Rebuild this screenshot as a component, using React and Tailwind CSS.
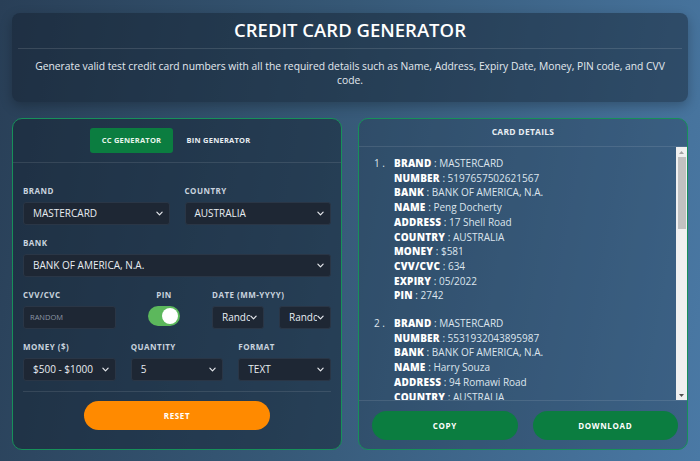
import React from "react";

const font = { fontFamily: '"Open Sans", "Noto Sans", sans-serif' };

function Chevron() {
  return (
    <svg width="7" height="5" viewBox="0 0 8 5" className="shrink-0">
      <path d="M1 1l3 3 3-3" fill="none" stroke="#e5e7eb" strokeWidth="1.4" strokeLinecap="round" strokeLinejoin="round" />
    </svg>
  );
}

function Select({ value, className = "", clip = false }) {
  return (
    <div className={`h-[23px] rounded-[3px] bg-[#1e2734] border border-[#2a3646] flex items-center justify-between pl-[9px] pr-[6px] ${className}`}>
      <span className={`text-[10px] text-[#e8edf2] whitespace-nowrap ${clip ? "overflow-hidden w-[29px]" : ""}`}>{value}</span>
      <Chevron />
    </div>
  );
}

function Label({ children, className = "" }) {
  return <div className={`text-[8px] font-bold tracking-[0.06em] text-[#c9d3de] mb-[6px] leading-[10px] ${className}`}>{children}</div>;
}

const cards = [
  [
    ["BRAND", "MASTERCARD"],
    ["NUMBER", "5197657502621567"],
    ["BANK", "BANK OF AMERICA, N.A."],
    ["NAME", "Peng Docherty"],
    ["ADDRESS", "17 Shell Road"],
    ["COUNTRY", "AUSTRALIA"],
    ["MONEY", "$581"],
    ["CVV/CVC", "634"],
    ["EXPIRY", "05/2022"],
    ["PIN", "2742"],
  ],
  [
    ["BRAND", "MASTERCARD"],
    ["NUMBER", "5531932043895987"],
    ["BANK", "BANK OF AMERICA, N.A."],
    ["NAME", "Harry Souza"],
    ["ADDRESS", "94 Romawi Road"],
    ["COUNTRY", "AUSTRALIA"],
    ["MONEY", "$742"],
    ["CVV/CVC", "118"],
    ["EXPIRY", "09/2024"],
    ["PIN", "5081"],
  ],
];

export default function App() {
  return (
    <div
      style={font}
      className="w-[700px] h-[461px] overflow-hidden bg-[linear-gradient(100deg,#293f57_0%,#365876_45%,#4a79a5_100%)] px-3 pt-[13px] text-white"
    >
      {/* header */}
      <div className="h-[89px] rounded-[8px] bg-[rgba(18,28,42,0.45)] shadow-[0_4px_12px_rgba(0,0,0,0.25)] px-[6px] pt-[4px] flex flex-col items-center">
        <h1 className="text-[18.5px] font-semibold leading-[26px] text-white">CREDIT CARD GENERATOR</h1>
        <div className="w-full h-px bg-[rgba(255,255,255,0.12)] mt-[5px]" />
        <p className="text-[10.3px] leading-[14px] text-[#e3e9ef] text-center mt-[10px] px-[6px]">
          Generate valid test credit card numbers with all the required details such as Name, Address, Expiry Date, Money, PIN code, and CVV code.
        </p>
      </div>

      <div className="flex gap-4 mt-4">
        {/* left panel */}
        <div className="w-[330px] h-[332px] rounded-[10px] border border-[#17905a] bg-[rgba(18,28,42,0.45)] flex flex-col">
          <div className="h-[44px] flex items-center justify-center gap-[4px] border-b border-[rgba(255,255,255,0.1)]">
            <div className="w-[83px] h-[25px] rounded-[3px] bg-[#0b7d40] flex items-center justify-center text-[7.5px] font-bold tracking-[0.03em] text-[#e8f5ec] ml-[-4px]">CC GENERATOR</div>
            <div className="w-[83px] h-[25px] flex items-center justify-center text-[7.5px] font-bold tracking-[0.03em] text-[#e8edf2]">BIN GENERATOR</div>
          </div>
          <div className="px-[10px] pt-[23px] flex flex-col">
            <div className="grid grid-cols-2 gap-x-[15px]">
              <div>
                <Label>BRAND</Label>
                <Select value="MASTERCARD" />
              </div>
              <div>
                <Label>COUNTRY</Label>
                <Select value="AUSTRALIA" />
              </div>
            </div>
            <div className="mt-[13px]">
              <Label>BANK</Label>
              <Select value="BANK OF AMERICA, N.A." />
            </div>
            <div className="mt-[13px] flex">
              <div className="w-[93px]">
                <Label>CVV/CVC</Label>
                <div className="h-[23px] rounded-[3px] bg-[#1e2734] border border-[#2a3646] flex items-center pl-[6px] text-[7.5px] text-[#8b96a3]">RANDOM</div>
              </div>
              <div className="flex-1 flex flex-col items-center">
                <Label>PIN</Label>
                <div className="w-[32px] h-[20px] rounded-full bg-[#5cb85c] flex items-center justify-end px-[2px]">
                  <div className="w-[16px] h-[16px] rounded-full bg-white" />
                </div>
              </div>
              <div className="w-[119px]">
                <Label>DATE (MM-YYYY)</Label>
                <div className="flex justify-between">
                  <Select value="Random" clip className="w-[52px] pl-[9px]" />
                  <Select value="Random" clip className="w-[52px] pl-[9px]" />
                </div>
              </div>
            </div>
            <div className="mt-[13px] grid grid-cols-3 gap-x-[15px]">
              <div>
                <Label>MONEY ($)</Label>
                <Select value="$500 - $1000" />
              </div>
              <div>
                <Label>QUANTITY</Label>
                <Select value="5" />
              </div>
              <div>
                <Label>FORMAT</Label>
                <Select value="TEXT" />
              </div>
            </div>
            <div className="h-px bg-[rgba(255,255,255,0.1)] mt-[10px]" />
            <div className="flex justify-center mt-[9px]">
              <div className="w-[186px] h-[29px] rounded-full bg-[#ff8a00] flex items-center justify-center text-[8px] font-bold tracking-[0.08em] text-white">RESET</div>
            </div>
          </div>
        </div>

        {/* right panel */}
        <div className="w-[330px] h-[332px] rounded-[10px] border border-[#17905a] bg-[rgba(30,45,65,0.3)] flex flex-col overflow-hidden">
          <div className="h-[28px] flex items-center justify-center border-b border-[rgba(255,255,255,0.1)] text-[8.5px] font-bold tracking-[0.03em] text-[#e8edf2]">CARD DETAILS</div>
          <div className="relative h-[254px] overflow-hidden border-b border-[rgba(255,255,255,0.1)]">
            <div className="pl-[15px] pt-[9px] pr-[14px]">
              {cards.map((c, i) => (
                <div key={i} className="flex mb-[13px]">
                  <div className="w-[20px] text-[10px] leading-[14.7px] text-[#dde5ed]">{i + 1} .</div>
                  <div className="flex flex-col">
                    {c.map(([k, v]) => (
                      <div key={k} className="text-[10px] leading-[14.7px] text-[#dde5ed] whitespace-nowrap">
                        <span className="font-extrabold text-white tracking-[0.02em]">{k}</span> : {v}
                      </div>
                    ))}
                  </div>
                </div>
              ))}
            </div>
            {/* scrollbar */}
            <div className="absolute right-0 top-0 bottom-0 w-[11px] bg-[#f0f0f0] flex flex-col items-center">
              <div className="h-[10px] flex items-center justify-center">
                <svg width="5" height="3" viewBox="0 0 5 3"><path d="M0 3L2.5 0 5 3z" fill="#a3a3a3" /></svg>
              </div>
              <div className="w-[8px] h-[72px] bg-[#c1c1c1]" />
              <div className="flex-1" />
              <div className="h-[10px] flex items-center justify-center">
                <svg width="5" height="3" viewBox="0 0 5 3"><path d="M0 0L2.5 3 5 0z" fill="#505050" /></svg>
              </div>
            </div>
          </div>
          <div className="flex gap-[15px] pl-[13px] pr-[9px] pt-[10px]">
            <div className="flex-1 h-[29px] rounded-full bg-[#0b7d40] flex items-center justify-center text-[8px] font-bold tracking-[0.08em] text-white">COPY</div>
            <div className="flex-1 h-[29px] rounded-full bg-[#0b7d40] flex items-center justify-center text-[8px] font-bold tracking-[0.08em] text-white">DOWNLOAD</div>
          </div>
        </div>
      </div>
    </div>
  );
}
